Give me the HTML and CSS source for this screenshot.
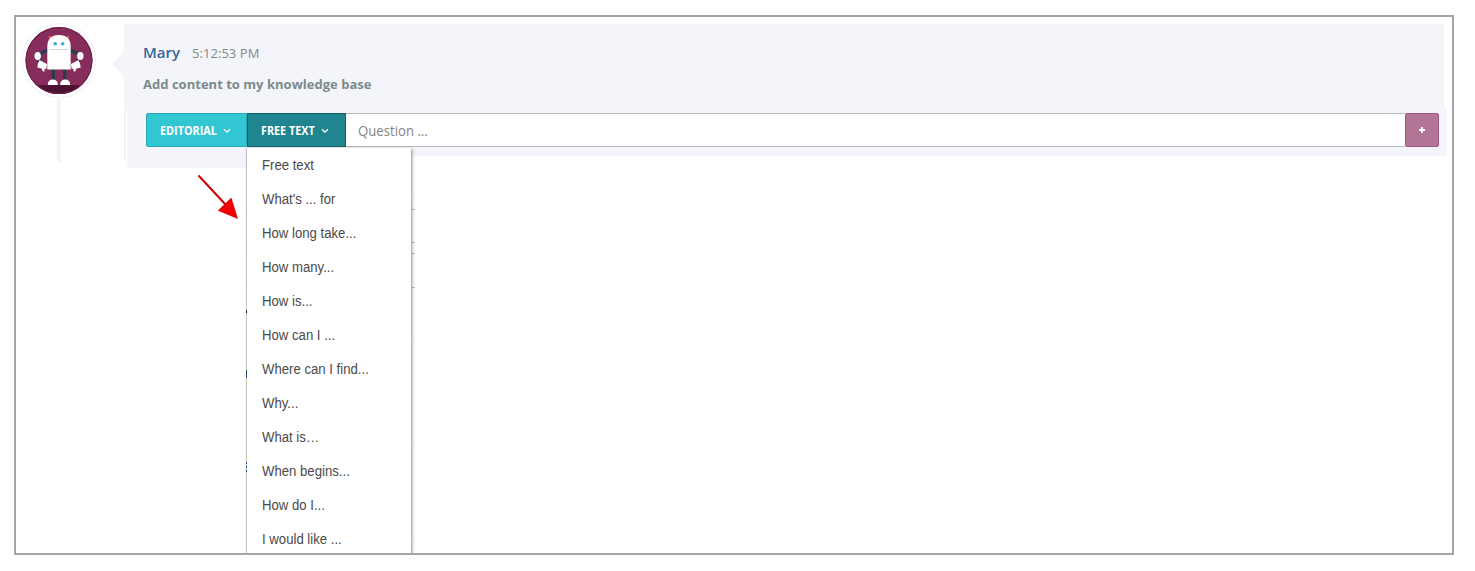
FILE: index.html
```html
<!DOCTYPE html>
<html lang="en">
<head>
    <meta charset="UTF-8">
    <meta name="viewport" content="width=device-width, initial-scale=1.0">
    <link rel="stylesheet" href="styles.css">
    <title>Knowledge base</title>
</head>
<body>
    <div class="frame">
        <div class="timeline">
            <svg class="avatar" width="76" height="76" viewBox="0 0 76 76">
                <defs>
                    <clipPath id="disc"><circle cx="38" cy="37.600" r="33.5"/></clipPath>
                </defs>
                <circle cx="38" cy="37.600" r="36.8" fill="#fff" stroke="#f5f5fa" stroke-width="1.5"/>
                <g clip-path="url(#disc)">
                    <rect width="76" height="76" fill="#862d5c"/>
                    <rect y="62" width="76" height="14" fill="#4c1232"/>
                </g>
                <circle cx="38" cy="37.600" r="32.9" fill="none" stroke="#701f4b" stroke-width="1.2"/>
                <path d="M27 27l-9.500 4.500l1.500 9M49 27l9.500 4.500l-1.500 9M32.300 46v12M43.700 46v12" fill="none" stroke="#263c50" stroke-width="3.200"/>
                <path d="M28 13l2.500 3.500M48 13l-2.500 3.500" stroke="#e8503e" stroke-width="2.400"/>
                <path d="M26.300 46.600V24C26.300 16 30 12 38 12S49.700 16 49.700 24v22.600z" fill="#fff"/>
                <circle cx="34.200" cy="20.800" r="1.800" fill="#3ba6d8"/>
                <circle cx="41.700" cy="20.800" r="1.800" fill="#3ba6d8"/>
                <path d="M28.500 26.500h19" stroke="#cfd0dc" stroke-width="1"/>
                <g fill="#fff">
                    <ellipse cx="16.700" cy="33" rx="3.200" ry="4"/>
                    <ellipse cx="59.300" cy="33" rx="3.200" ry="4"/>
                    <path d="M18.500 37l7.500 4-.5 4.500-2 .5v2.500l-2-.3-.5-2.500-4.700-1.200.7-4z"/>
                    <path d="M57.500 37l-7.500 4 .5 4.500 2 .5v2.500l2-.3.5-2.500 4.700-1.200-.7-4z"/>
                    <path d="M26.800 62q0-5.500 5-5.500t5 5.500zM39.200 62q0-5.500 5-5.500t5 5.500z"/>
                </g>
            </svg>
            <div class="line"></div>
        </div>
        <div class="message">
            <div class="header">
                <div><span class="name">Mary</span><span class="time">5:12:53 PM</span></div>
                <div class="text">Add content to my knowledge base</div>
            </div>
            <div class="compose">
                <div class="bar">
                    <div class="btn editorial">
                        <span>EDITORIAL</span>
                        <svg width="8" height="6" viewBox="0 0 8 6"><path d="M1 1.200l3 3 3-3"/></svg>
                    </div>
                    <div class="btn free">
                        <span>FREE TEXT</span>
                        <svg width="8" height="6" viewBox="0 0 8 6"><path d="M1 1.200l3 3 3-3"/></svg>
                        <ul class="menu">
                            <li><span>Free text</span></li>
                            <li><span>What's ... for</span></li>
                            <li><span>How long take...</span></li>
                            <li><span>How many...</span></li>
                            <li><span>How is...</span></li>
                            <li><span>How can I ...</span></li>
                            <li><span>Where can I find...</span></li>
                            <li><span>Why...</span></li>
                            <li><span>What is…</span></li>
                            <li><span>When begins...</span></li>
                            <li><span>How do I...</span></li>
                            <li><span>I would like ...</span></li>
                        </ul>
                        <!-- edges of the rows hidden behind the menu -->
                        <svg class="edges" width="170" height="440" viewBox="0 0 170 440">
                            <g stroke="#a5a5a5">
                                <path d="M0 96.500h1M166 96.500h2.500M0 129.500h1M166 129.500h2.500M0 140.500h1M166 140.500h2.500M0 174.500h1M166 174.500h2.500"/>
                            </g>
                            <path d="M166 85.500h2.500M166 230.500h2.500M166 333.500h2.500M166 425.500h2.500" stroke="#e2e2e2"/>
                            <path d="M.5 197v3" stroke="#222"/>
                            <path d="M.5 257v8M.5 349v2M.5 353v2M.5 357v2" stroke="#204a80"/>
                        </svg>
                    </div>
                    <div class="question"><span>Question ...</span></div>
                    <div class="plus">
                        <svg width="6" height="6" viewBox="0 0 6 6"><path d="M3 0v6M0 3h6"/></svg>
                    </div>
                </div>
            </div>
            <div class="tail"></div>
        </div>
        <svg class="arrow" width="42" height="46" viewBox="0 0 42 46">
            <path d="M1.500 1.500L29 31" stroke="#c80000" stroke-width="2"/>
            <path d="M40.500 44.500L34.200 24L21.300 36.500z" fill="#f00000" stroke="#c80000" stroke-width=".6"/>
        </svg>
    </div>
</body>
</html>
```
FILE: styles.css
```css
*{
    box-sizing: border-box;
}
body{
    background-color: #fff;
    margin: 0;
    padding: 15px 0 0 14px;
    font-family: "Open Sans", sans-serif;
}
.frame{
    position: relative;
    display: flex;
    width: 1440px;
    height: 540px;
    border: 2px solid #a5a5a5;
    overflow: hidden;
}
.timeline{
    width: 108px;
    padding: 6px 0 0 5px;
}
.avatar{
    display: block;
}
.line{
    width: 4px;
    height: 63px;
    margin-left: 36px;
    background: #f4f5fa;
}
.message{
    width: 1323px;
    padding-top: 7px;
}
.header{
    position: relative;
    width: 1320px;
    height: 84px;
    padding: 17px 0 0 19px;
    background: #f4f5fa;
}
.header::before{
    content: "";
    position: absolute;
    left: -12px;
    top: 28px;
    border: 12px solid transparent;
    border-left: 0;
    border-right-color: #f4f5fa;
}
.name{
    display: inline-block;
    width: 49px;
    font-size: 15px;
    line-height: 22px;
    font-weight: 600;
    color: #34659c;
}
.time{
    font-size: 13px;
    letter-spacing: 0.05px;
    color: #7f8c8d;
}
.text{
    margin-top: 11px;
    font-size: 13px;
    line-height: 20px;
    font-weight: 700;
    letter-spacing: 0.02px;
    color: #7b8a8b;
}
.compose{
    height: 48px;
    margin-left: 3px;
    padding: 5px 8px 0 19px;
    background: #f4f5fa;
    box-shadow: -1px 0 #fff;
}
.compose::before{
    content: "";
    float: left;
    width: 2px;
    height: 54px;
    margin: -5px 0 0 -22px;
    background: #f4f5fa;
}
.bar{
    display: flex;
    height: 34px;
}
.btn{
    position: relative;
    display: flex;
    align-items: center;
    padding: 1px 0 0 13px;
    border: 1px solid;
    font-size: 11.5px;
    font-weight: 700;
    color: #fff;
    white-space: nowrap;
}
.btn > span{
    margin-right: -3px;
    transform: scaleX(.94);
    transform-origin: left;
}
.btn > svg:not(.edges){
    margin-left: 6px;
}
.btn svg path{
    fill: none;
}
.btn > svg:not(.edges) path{
    stroke: #fff;
    stroke-width: 1.3;
}
.editorial{
    width: 101px;
    background: #32c5d2;
    border-color: #26a9b5;
    border-radius: 2px 0 0 2px;
}
.free{
    width: 99px;
    background: #1f858e;
    border-color: #10636b;
}
.menu{
    position: absolute;
    z-index: 2;
    left: -1px;
    top: 34px;
    width: 164px;
    height: 410px;
    margin: 0;
    padding: 0;
    list-style: none;
    background: #fff;
    box-shadow: -1px 0 0 #c4c4c4, 1px 1px 3px rgba(0,0,0,.45);
    font-family: "Liberation Sans", sans-serif;
    font-size: 14px;
    font-weight: 400;
    color: #4a4a4a;
}
.menu li{
    height: 34px;
    padding-left: 14.5px;
    line-height: 34px;
}
.menu span{
    display: inline-block;
    transform: scaleX(.94);
    transform-origin: left;
}
.edges{
    position: absolute;
    z-index: 3;
    left: -2px;
    top: -1px;
}
.question{
    flex: 1;
    padding-left: 12px;
    border: 1px solid #b9bcbe;
    border-width: 1px 0;
    background: #fff;
    font-size: 14px;
    line-height: 34px;
    color: #858585;
}
.question span{
    display: inline-block;
    transform: scaleX(.94);
    transform-origin: left;
}
.plus{
    display: flex;
    align-items: center;
    justify-content: center;
    width: 34px;
    background: #b27595;
    border: 1px solid #9f5b80;
    border-radius: 2px;
}
.plus path{
    stroke: #fff;
    stroke-width: 1.8;
}
.tail{
    width: 120px;
    height: 12px;
    margin-left: 3px;
    background: #f4f5fa;
}
.arrow{
    position: absolute;
    left: 181px;
    top: 157px;
}
```
